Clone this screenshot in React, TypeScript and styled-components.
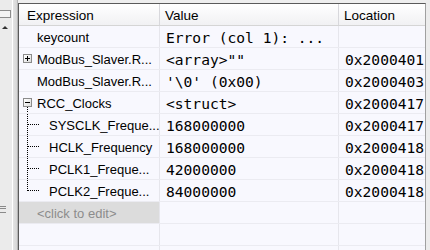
import React from "react";
import styled, { createGlobalStyle } from "styled-components";

type WatchRow = {
	name: string;
	value: string;
	location: string;
	expander?: "plus" | "minus";
	child?: "mid" | "last";
};

const rows: WatchRow[] = [
	{ name: "keycount", value: "Error (col 1): ...", location: "" },
	{ name: "ModBus_Slaver.R...", value: '<array>""', location: "0x2000401", expander: "plus" },
	{ name: "ModBus_Slaver.R...", value: "'\\0' (0x00)", location: "0x2000403" },
	{ name: "RCC_Clocks", value: "<struct>", location: "0x2000417", expander: "minus" },
	{ name: "SYSCLK_Freque...", value: "168000000", location: "0x2000417", child: "mid" },
	{ name: "HCLK_Frequency", value: "168000000", location: "0x2000418", child: "mid" },
	{ name: "PCLK1_Freque...", value: "42000000", location: "0x2000418", child: "mid" },
	{ name: "PCLK2_Freque...", value: "84000000", location: "0x2000418", child: "last" },
];

const GlobalStyle = createGlobalStyle`
	html, body {
		margin: 0;
		padding: 0;
		background: #eeeeee;
		overflow: hidden;
	}
`;

const Frame = styled.div`
	display: flex;
	width: 430px;
	height: 250px;
	overflow: hidden;
	background: #eeeeee;
`;

const LeftStrip = styled.div`
	width: 18px;
	flex-shrink: 0;
	display: flex;
	background: #ececec;
`;

const StripInner = styled.div`
	width: 12px;
	position: relative;
	border-right: 1px solid #ffffff;
	background: #ebebeb;
`;

const StripEdge = styled.div`
	flex: 1;
	background: linear-gradient(to right, #e4e4e4, #d6d6d6);
	border-right: 1px solid #b5b5b5;
`;

const StripButton = styled.div`
	position: absolute;
	left: 0;
	top: 10px;
	width: 10px;
	height: 6px;
	border: 1px solid #8c8c8c;
	border-left: none;
	background: #f4f4f4;
`;

const StripArrow = styled.div`
	position: absolute;
	left: 2px;
	top: 26px;
	width: 0;
	height: 0;
	border-left: 3px solid transparent;
	border-right: 3px solid transparent;
	border-bottom: 3px solid #303030;
`;

const StripGrip = styled.div`
	position: absolute;
	left: 0;
	top: 206px;
	width: 6px;
	height: 5px;
	border-top: 1px solid #8a8a8a;
	border-bottom: 1px solid #8a8a8a;
	&::after {
		content: "";
		position: absolute;
		left: 0;
		top: 1px;
		width: 6px;
		border-top: 1px solid #8a8a8a;
	}
`;

const Panel = styled.div`
	margin-top: 3px;
	width: 406px;
	flex-shrink: 0;
	border-top: 1px solid #5a5a5a;
	border-left: 1px solid #5a5a5a;
	border-right: 1px solid #a0a0a0;
	background: #f8f8fe;
	display: flex;
	flex-direction: column;
`;

const RightStrip = styled.div`
	flex: 1;
	background: #ececec;
`;

const Row = styled.div<{ $header?: boolean }>`
	display: grid;
	grid-template-columns: 141px 179px 86px;
	height: 22px;
	flex-shrink: 0;
	box-sizing: border-box;
	border-bottom: 1px solid ${(p) => (p.$header ? "#d5d5d5" : "#ebebf1")};
	background: ${(p) =>
		p.$header ? "linear-gradient(to bottom, #ffffff, #f1f1f3)" : "transparent"};
`;

const HeadCell = styled.div<{ $pad: number }>`
	display: flex;
	align-items: center;
	padding-left: ${(p) => p.$pad}px;
	padding-top: 1px;
	border-right: 1px solid #d8d8dc;
	font-family: "Liberation Sans", Arial, sans-serif;
	font-size: 13.5px;
	color: #000;
	&:last-child {
		border-right: none;
	}
`;

const NameCell = styled.div<{ $muted?: boolean }>`
	position: relative;
	display: flex;
	align-items: center;
	padding-left: 18px;
	padding-top: 1px;
	border-right: 1px solid #e6e6ec;
	font-family: "Liberation Sans", Arial, sans-serif;
	font-size: 13px;
	color: ${(p) => (p.$muted ? "#8c8c8c" : "#000")};
	background: ${(p) => (p.$muted ? "#dcdcdc" : "transparent")};
	white-space: nowrap;
	overflow: hidden;
`;

const MonoCell = styled.div`
	display: flex;
	align-items: center;
	padding-left: 6px;
	padding-top: 1px;
	border-right: 1px solid #e6e6ec;
	font-family: "DejaVu Sans Mono", "Liberation Mono", monospace;
	font-size: 14.6px;
	color: #000;
	white-space: pre;
	overflow: hidden;
	&:last-child {
		border-right: none;
	}
`;

const Expander = styled.div<{ $open?: boolean }>`
	position: absolute;
	left: 4px;
	top: 6px;
	width: 7px;
	height: 7px;
	border: 1px solid #8b8b8b;
	background: linear-gradient(135deg, #ffffff, #dcdcdc);
	&::before {
		content: "";
		position: absolute;
		left: 1px;
		top: 3px;
		width: 5px;
		border-top: 1px solid #000;
	}
	&::after {
		content: "";
		display: ${(p) => (p.$open ? "none" : "block")};
		position: absolute;
		left: 3px;
		top: 1px;
		height: 5px;
		border-left: 1px solid #000;
	}
`;

const StemBelow = styled.div`
	position: absolute;
	left: 8px;
	top: 15px;
	bottom: -1px;
	border-left: 1px dotted #000;
`;

const TreeLine = styled.div<{ $last?: boolean }>`
	position: absolute;
	left: 8px;
	top: -1px;
	height: ${(p) => (p.$last ? "12px" : "calc(100% + 1px)")};
	border-left: 1px dotted #000;
	&::after {
		content: "";
		position: absolute;
		left: 0;
		top: 11px;
		width: 11px;
		border-top: 1px dotted #000;
	}
`;

const ChildLabel = styled.span`
	padding-left: 12px;
`;

export default function App() {
	return (
		<>
			<GlobalStyle />
			<Frame>
				<LeftStrip>
					<StripInner>
						<StripButton />
						<StripArrow />
						<StripGrip />
					</StripInner>
					<StripEdge />
				</LeftStrip>
				<Panel>
					<Row $header>
						<HeadCell $pad={8}>Expression</HeadCell>
						<HeadCell $pad={5}>Value</HeadCell>
						<HeadCell $pad={5}>Location</HeadCell>
					</Row>
					{rows.map((r, i) => (
						<Row key={i}>
							<NameCell>
								{r.expander && <Expander $open={r.expander === "minus"} />}
								{r.expander === "minus" && <StemBelow />}
								{r.child && <TreeLine $last={r.child === "last"} />}
								{r.child ? <ChildLabel>{r.name}</ChildLabel> : r.name}
							</NameCell>
							<MonoCell>{r.value}</MonoCell>
							<MonoCell>{r.location}</MonoCell>
						</Row>
					))}
					<Row>
						<NameCell $muted>&lt;click to edit&gt;</NameCell>
						<MonoCell />
						<MonoCell />
					</Row>
					<Row>
						<NameCell />
						<MonoCell />
						<MonoCell />
					</Row>
					<Row>
						<NameCell />
						<MonoCell />
						<MonoCell />
					</Row>
				</Panel>
				<RightStrip />
			</Frame>
		</>
	);
}
